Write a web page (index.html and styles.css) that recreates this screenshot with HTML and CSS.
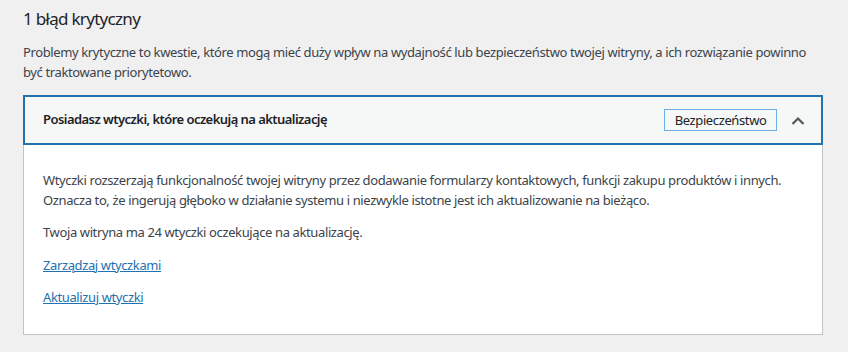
FILE: index.html
```html
<!DOCTYPE html>
<html lang="pl">
<head>
    <meta charset="UTF-8">
    <meta name="viewport" content="width=device-width, initial-scale=1.0">
    <title>Stan witryny</title>
    <link rel="stylesheet" href="styles.css">
</head>
<body>
    <div class="issues">
        <h2 class="issues-title">1 błąd krytyczny</h2>
        <p class="issues-desc">Problemy krytyczne to kwestie, które mogą mieć duży wpływ na wydajność lub bezpieczeństwo twojej witryny, a ich rozwiązanie powinno być traktowane priorytetowo.</p>

        <div class="accordion">
            <div class="accordion-head">
                <span class="accordion-title">Posiadasz wtyczki, które oczekują na aktualizację</span>
                <span class="badge">Bezpieczeństwo</span>
                <svg class="chevron" width="14" height="9" viewBox="0 0 14 9">
                    <polyline points="1.5,8 7,2.5 12.5,8" fill="none" stroke="#50575e" stroke-width="2.2"/>
                </svg>
            </div>
            <div class="accordion-panel">
                <p>Wtyczki rozszerzają funkcjonalność twojej witryny przez dodawanie formularzy kontaktowych, funkcji zakupu produktów i innych. Oznacza to, że ingerują głęboko w działanie systemu i niezwykle istotne jest ich aktualizowanie na bieżąco.</p>
                <p>Twoja witryna ma 24 wtyczki oczekujące na aktualizację.</p>
                <p><a href="#">Zarządzaj wtyczkami</a></p>
                <p><a href="#">Aktualizuj wtyczki</a></p>
            </div>
        </div>
    </div>
</body>
</html>
```

FILE: styles.css
```css
body {
    margin: 0;
    background-color: #f0f0f1;
    font-family: "Noto Sans", sans-serif;
    font-size: 13px;
    line-height: 1.5;
    letter-spacing: -0.38px;
    color: #3c434a;
}

.issues {
    width: 800px;
    padding: 6px 0 0 23px;
}

.issues-title {
    margin: 0 0 12px;
    font-size: 17px;
    font-weight: 400;
    line-height: 25px;
    letter-spacing: -0.7px;
    color: #1d2327;
}

.issues-desc {
    margin: 0 0 13px;
    width: 802px;
}

.accordion {
    background: #fff;
}

.accordion-head {
    display: flex;
    align-items: center;
    height: 46px;
    padding: 0 16px 0 18px;
    border: 2px solid #2271b1;
    background: #f6f7f7;
}

.accordion-title {
    flex: 1;
    font-weight: 600;
    letter-spacing: -0.55px;
    color: #1d2327;
}

.badge {
    padding: 0 9.5px;
    height: 20px;
    line-height: 20px;
    border: 1px solid #72aee6;
    color: #1d2327;
    margin-right: 14px;
}

.accordion-panel {
    padding: 13px 19px 13px 19px;
    border: 1px solid #c3c4c7;
    border-top: none;
}

.accordion-panel p {
    margin: 13px 0;
}

.accordion-panel a {
    color: #2271b1;
}
```
